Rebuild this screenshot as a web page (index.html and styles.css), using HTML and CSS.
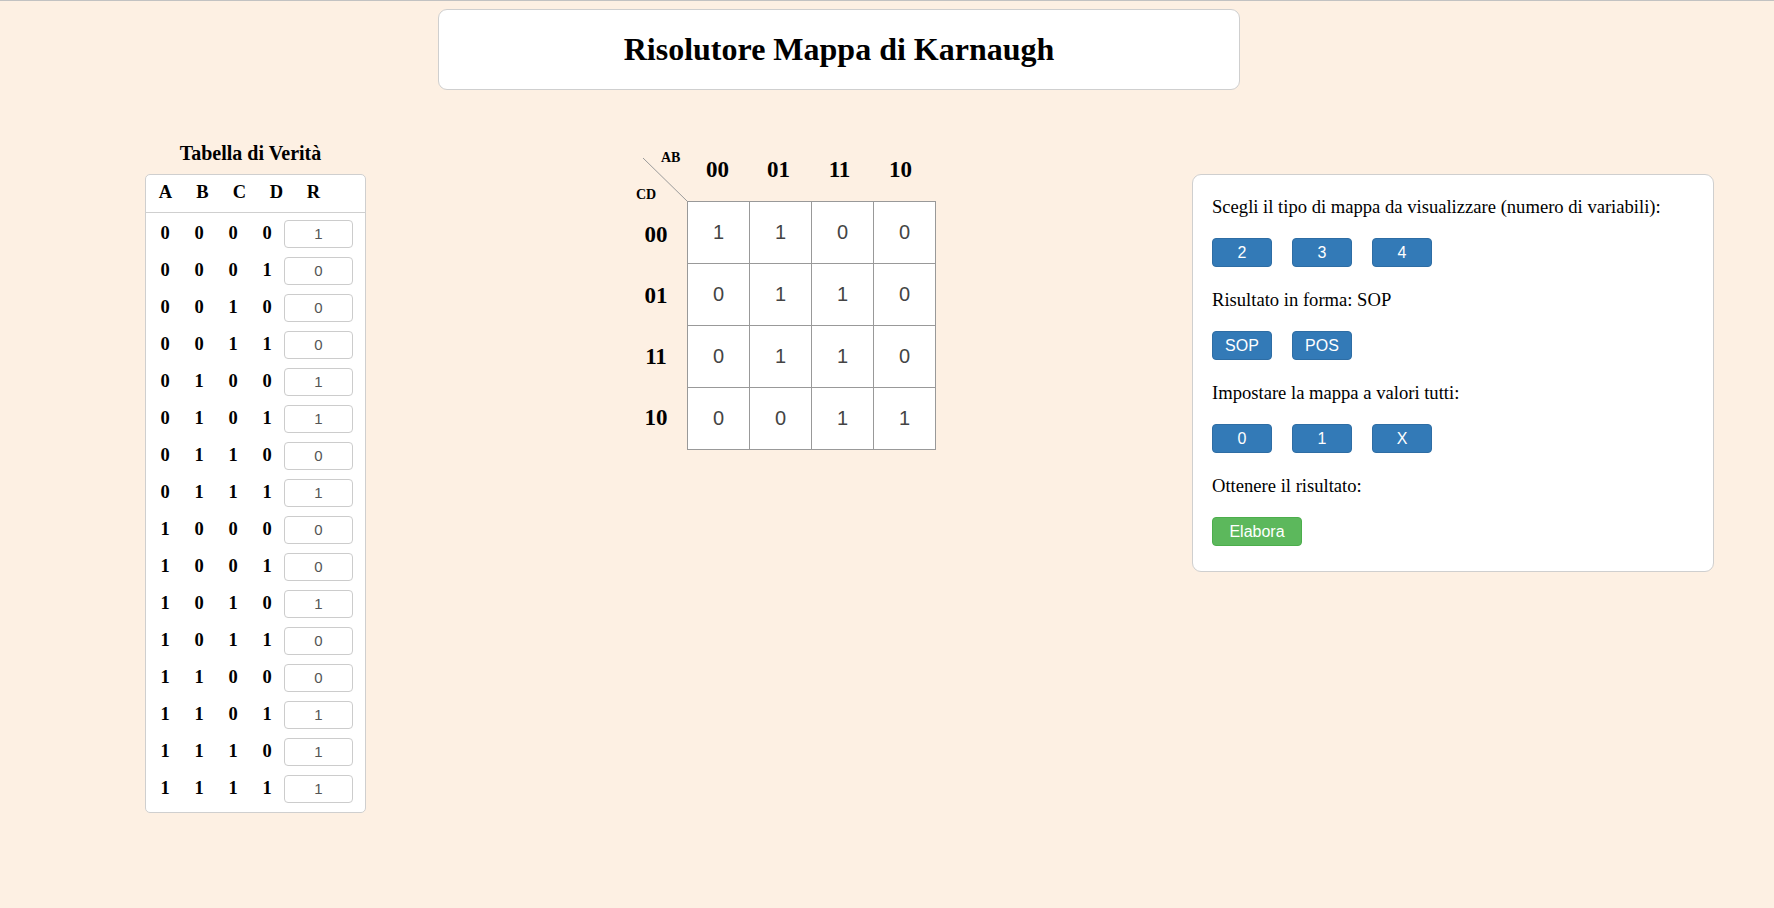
FILE: index.html
```html
<!DOCTYPE html>
<html lang="it">
<head>
<meta charset="utf-8">
<title>Risolutore Mappa di Karnaugh</title>
<link rel="stylesheet" href="styles.css">
</head>
<body>
<header class="header">
  <h1 class="title">Risolutore Mappa di Karnaugh</h1>
</header>
<main class="main">
  <section class="truth">
    <h3 class="truth-title">Tabella di Verità</h3>
    <div class="truth-box">
      <div class="truth-head">
        <span>A</span><span>B</span><span>C</span><span>D</span><span>R</span>
      </div>
      <div class="truth-body">
        <div class="trow"><span>0</span><span>0</span><span>0</span><span>0</span><input class="tin" type="text" value="1"></div>
        <div class="trow"><span>0</span><span>0</span><span>0</span><span>1</span><input class="tin" type="text" value="0"></div>
        <div class="trow"><span>0</span><span>0</span><span>1</span><span>0</span><input class="tin" type="text" value="0"></div>
        <div class="trow"><span>0</span><span>0</span><span>1</span><span>1</span><input class="tin" type="text" value="0"></div>
        <div class="trow"><span>0</span><span>1</span><span>0</span><span>0</span><input class="tin" type="text" value="1"></div>
        <div class="trow"><span>0</span><span>1</span><span>0</span><span>1</span><input class="tin" type="text" value="1"></div>
        <div class="trow"><span>0</span><span>1</span><span>1</span><span>0</span><input class="tin" type="text" value="0"></div>
        <div class="trow"><span>0</span><span>1</span><span>1</span><span>1</span><input class="tin" type="text" value="1"></div>
        <div class="trow"><span>1</span><span>0</span><span>0</span><span>0</span><input class="tin" type="text" value="0"></div>
        <div class="trow"><span>1</span><span>0</span><span>0</span><span>1</span><input class="tin" type="text" value="0"></div>
        <div class="trow"><span>1</span><span>0</span><span>1</span><span>0</span><input class="tin" type="text" value="1"></div>
        <div class="trow"><span>1</span><span>0</span><span>1</span><span>1</span><input class="tin" type="text" value="0"></div>
        <div class="trow"><span>1</span><span>1</span><span>0</span><span>0</span><input class="tin" type="text" value="0"></div>
        <div class="trow"><span>1</span><span>1</span><span>0</span><span>1</span><input class="tin" type="text" value="1"></div>
        <div class="trow"><span>1</span><span>1</span><span>1</span><span>0</span><input class="tin" type="text" value="1"></div>
        <div class="trow"><span>1</span><span>1</span><span>1</span><span>1</span><input class="tin" type="text" value="1"></div>
      </div>
    </div>
  </section>

  <section class="kmap">
    <div class="corner">
      <svg class="diag" width="62" height="62" viewBox="0 0 62 62"><line x1="18" y1="19" x2="62.5" y2="62.5" stroke="#9a9a9a" stroke-width="1"/></svg>
      <span class="lab-ab">AB</span>
      <span class="lab-cd">CD</span>
    </div>
    <div class="col-labels"><span>00</span><span>01</span><span>11</span><span>10</span></div>
    <div class="row-labels"><span>00</span><span>01</span><span>11</span><span>10</span></div>
    <div class="cells">
      <div class="cell">1</div><div class="cell">1</div><div class="cell">0</div><div class="cell">0</div>
      <div class="cell">0</div><div class="cell">1</div><div class="cell">1</div><div class="cell">0</div>
      <div class="cell">0</div><div class="cell">1</div><div class="cell">1</div><div class="cell">0</div>
      <div class="cell">0</div><div class="cell">0</div><div class="cell">1</div><div class="cell">1</div>
    </div>
  </section>

  <section class="panel">
    <p class="ptext">Scegli il tipo di mappa da visualizzare (numero di variabili):</p>
    <div class="btns"><button class="btn">2</button><button class="btn">3</button><button class="btn">4</button></div>
    <p class="ptext">Risultato in forma: SOP</p>
    <div class="btns"><button class="btn">SOP</button><button class="btn">POS</button></div>
    <p class="ptext">Impostare la mappa a valori tutti:</p>
    <div class="btns"><button class="btn">0</button><button class="btn">1</button><button class="btn">X</button></div>
    <p class="ptext">Ottenere il risultato:</p>
    <div class="btns last"><button class="btn btn-green">Elabora</button></div>
  </section>
</main>
</body>
</html>
```

FILE: styles.css
```css
html, body {
  margin: 0;
  padding: 0;
}
body {
  background: #fdf0e3;
  border-top: 1px solid #c2c2c2;
  font-family: "Liberation Serif", "Times New Roman", serif;
  color: #000;
  min-height: 907px;
}

.header {
  box-sizing: border-box;
  margin: 8px 0 0 438px;
  width: 802px;
  height: 81px;
  background: #fff;
  border: 1px solid #cfcfcf;
  border-radius: 9px;
  padding: 21px 0;
}
.title {
  margin: 0;
  font-size: 32px;
  line-height: 37px;
  font-weight: bold;
  text-align: center;
}

.main {
  display: flex;
  align-items: flex-start;
  margin-top: 49px;
}

/* Truth table */
.truth {
  margin-left: 145px;
  width: 221px;
}
.truth-title {
  margin: 0 0 10px 0;
  padding: 3px 10px 0 0;
  font-size: 20px;
  line-height: 22px;
  font-weight: bold;
  text-align: center;
}
.truth-box {
  box-sizing: border-box;
  width: 221px;
  background: #fff;
  border: 1px solid #cfcfcf;
  border-radius: 5px;
}
.truth-head {
  display: grid;
  grid-template-columns: repeat(5, 37px);
  padding: 7px 0 9px 1px;
  border-bottom: 1px solid #cfcfcf;
  font-size: 18.5px;
  line-height: 21px;
  font-weight: bold;
  text-align: center;
}
.truth-body {
  padding: 2px 0 5px 2px;
}
.trow {
  display: grid;
  grid-template-columns: 34px 34px 34px 34px 69px;
  align-items: center;
  height: 37px;
  font-size: 18.5px;
  font-weight: bold;
  text-align: center;
}
.tin {
  box-sizing: border-box;
  width: 69px;
  height: 28px;
  margin: 0;
  padding: 0;
  border: 1px solid #cccccc;
  border-radius: 4px;
  background: #fff;
  font-family: "Liberation Sans", Arial, sans-serif;
  font-size: 15px;
  color: #555;
  text-align: center;
}

/* Karnaugh map */
.kmap {
  margin-left: 259px;
  display: grid;
  grid-template-columns: 62px 249px;
  grid-template-rows: 62px 249px;
}
.corner {
  position: relative;
  width: 62px;
  height: 62px;
}
.diag {
  position: absolute;
  left: 0;
  top: 0;
}
.lab-ab, .lab-cd {
  position: absolute;
  font-size: 14px;
  line-height: 14px;
  font-weight: bold;
}
.lab-ab { left: 36px; top: 12px; }
.lab-cd { left: 11px; top: 49px; }

.col-labels {
  display: flex;
}
.col-labels span {
  width: 61px;
  line-height: 62px;
  text-align: center;
  font-size: 23px;
  font-weight: bold;
}
.row-labels {
  display: flex;
  flex-direction: column;
  padding-top: 3px;
}
.row-labels span {
  height: 61px;
  line-height: 61px;
  text-align: center;
  font-size: 23px;
  font-weight: bold;
}
.cells {
  display: grid;
  grid-template-columns: repeat(4, 62px);
  grid-template-rows: repeat(4, 62px);
  border-left: 1px solid #999;
  border-top: 1px solid #999;
  width: 249px;
  height: 249px;
  box-sizing: border-box;
}
.cell {
  box-sizing: border-box;
  background: #fff;
  border-right: 1px solid #999;
  border-bottom: 1px solid #999;
  display: flex;
  align-items: center;
  justify-content: center;
  font-family: "Liberation Sans", Arial, sans-serif;
  font-size: 20px;
  color: #444;
}

/* Panel */
.panel {
  box-sizing: border-box;
  margin-left: 256px;
  margin-top: 35px;
  width: 522px;
  background: #fff;
  border: 1px solid #cfcfcf;
  border-radius: 9px;
  padding: 21px 19px 25px 19px;
}
.ptext {
  margin: 0 0 21px 0;
  font-size: 18.6px;
  line-height: 21px;
}
.btns {
  display: flex;
  gap: 20px;
  margin-bottom: 22px;
}
.btns.last {
  margin-bottom: 0;
}
.btn {
  box-sizing: border-box;
  width: 60px;
  height: 29px;
  margin: 0;
  padding: 0;
  border: 1px solid #2e6da4;
  border-radius: 4px;
  background: #337ab7;
  color: #fff;
  font-family: "Liberation Sans", Arial, sans-serif;
  font-size: 16px;
}
.btn-green {
  width: 90px;
  background: #5cb85c;
  border-color: #4cae4c;
}
```
